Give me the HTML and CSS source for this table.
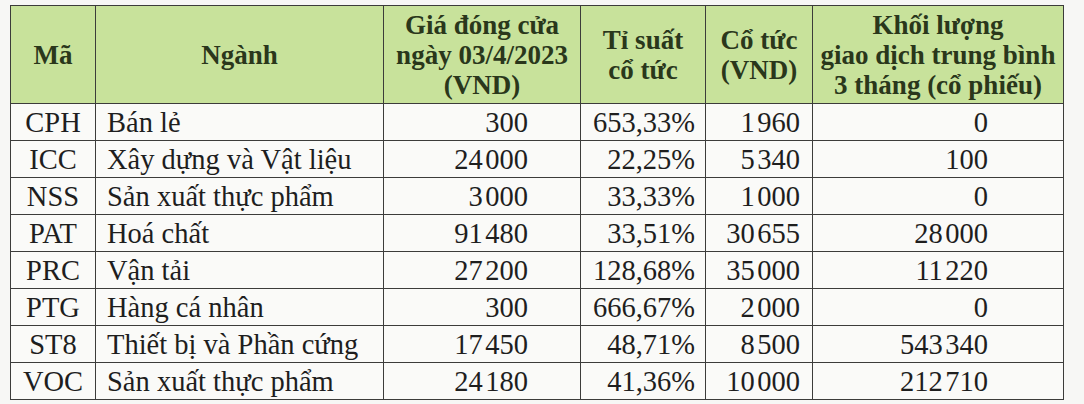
FILE: index.html
```html
<!DOCTYPE html>
<html lang="vi">
<head>
<meta charset="utf-8">
<link rel="stylesheet" href="styles.css">
</head>
<body>
<table class="tbl">
  <colgroup>
    <col class="c1"><col class="c2"><col class="c3"><col class="c4"><col class="c5"><col class="c6">
  </colgroup>
  <thead>
    <tr>
      <th>Mã</th>
      <th>Ngành</th>
      <th>Giá đóng cửa<br>ngày 03/4/2023<br>(VND)</th>
      <th>Tỉ suất<br>cổ tức</th>
      <th>Cổ tức<br>(VND)</th>
      <th>Khối lượng<br>giao dịch trung bình<br>3 tháng (cổ phiếu)</th>
    </tr>
  </thead>
  <tbody>
    <tr><td class="code">CPH</td><td class="ind">Bán lẻ</td><td class="price">300</td><td class="yield">653,33%</td><td class="div">1&#8202;960</td><td class="vol">0</td></tr>
    <tr><td class="code">ICC</td><td class="ind">Xây dựng và Vật liệu</td><td class="price">24&#8202;000</td><td class="yield">22,25%</td><td class="div">5&#8202;340</td><td class="vol">100</td></tr>
    <tr><td class="code">NSS</td><td class="ind">Sản xuất thực phẩm</td><td class="price">3&#8202;000</td><td class="yield">33,33%</td><td class="div">1&#8202;000</td><td class="vol">0</td></tr>
    <tr><td class="code">PAT</td><td class="ind">Hoá chất</td><td class="price">91&#8202;480</td><td class="yield">33,51%</td><td class="div">30&#8202;655</td><td class="vol">28&#8202;000</td></tr>
    <tr><td class="code">PRC</td><td class="ind">Vận tải</td><td class="price">27&#8202;200</td><td class="yield">128,68%</td><td class="div">35&#8202;000</td><td class="vol">11&#8202;220</td></tr>
    <tr><td class="code">PTG</td><td class="ind">Hàng cá nhân</td><td class="price">300</td><td class="yield">666,67%</td><td class="div">2&#8202;000</td><td class="vol">0</td></tr>
    <tr><td class="code">ST8</td><td class="ind">Thiết bị và Phần cứng</td><td class="price">17&#8202;450</td><td class="yield">48,71%</td><td class="div">8&#8202;500</td><td class="vol">543&#8202;340</td></tr>
    <tr><td class="code">VOC</td><td class="ind">Sản xuất thực phẩm</td><td class="price">24&#8202;180</td><td class="yield">41,36%</td><td class="div">10&#8202;000</td><td class="vol">212&#8202;710</td></tr>
  </tbody>
</table>
</body>
</html>
```

FILE: styles.css
```css
html, body {
  margin: 0;
  padding: 0;
  background: #f7f7f5;
}
body {
  padding: 5px 0 0 10px;
}
.tbl {
  border-collapse: collapse;
  table-layout: fixed;
  width: 1053px;
  font-family: "Liberation Serif", "Times New Roman", serif;
  font-size: 28.5px;
  color: #1e1e1e;
}
.c1 { width: 85px; }
.c2 { width: 288px; }
.c3 { width: 197px; }
.c4 { width: 125px; }
.c5 { width: 107px; }
.c6 { width: 251px; }
.tbl th, .tbl td {
  border: 1.5px solid #3c3c3a;
  padding: 0;
  white-space: nowrap;
}
.tbl th {
  background: #c8e29b;
  color: #2a371b;
  font-weight: bold;
  font-size: 27px;
  height: 97px;
  line-height: 30px;
  text-align: center;
  vertical-align: middle;
}
.tbl td {
  line-height: 34px;
  padding-top: 2px;
  background: #fafaf8;
}
.tbl td.code { text-align: center; }
.tbl td.ind { text-align: left; padding-left: 11px; }
.tbl td.price { text-align: right; padding-right: 52px; }
.tbl td.yield { text-align: right; padding-right: 10px; }
.tbl td.div { text-align: right; padding-right: 12px; }
.tbl td.vol { text-align: right; padding-right: 75px; }
```
